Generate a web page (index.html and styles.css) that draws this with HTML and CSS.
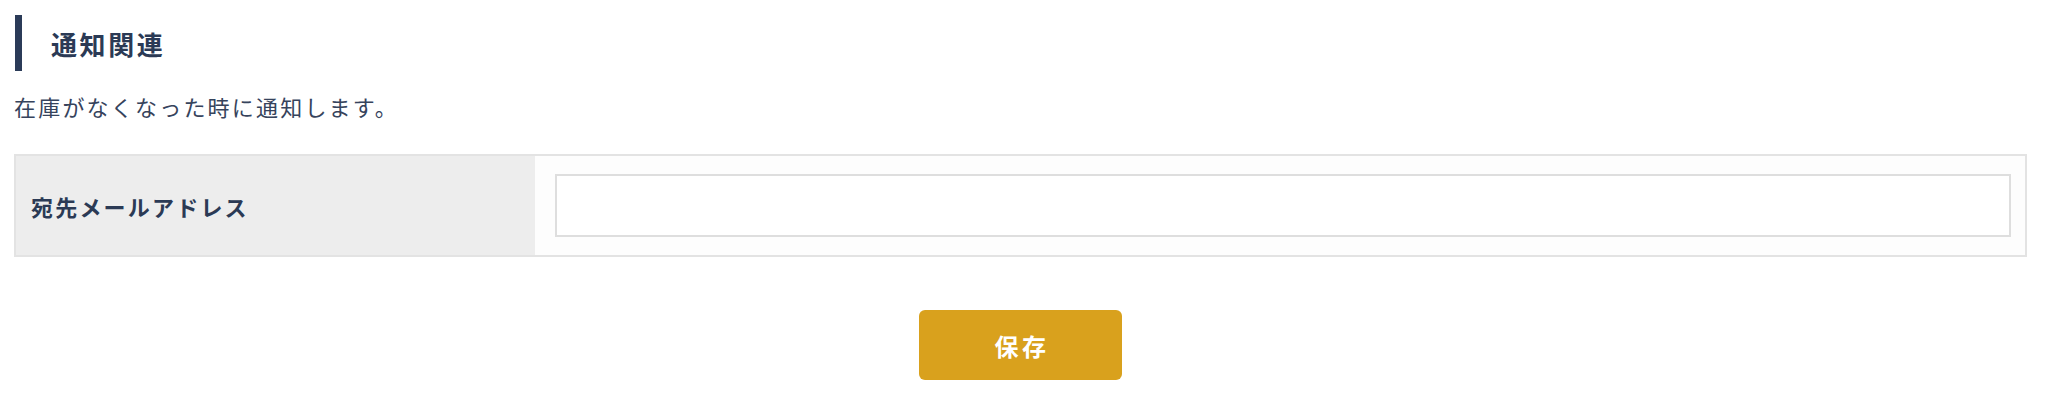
FILE: index.html
```html
<!DOCTYPE html>
<html lang="ja">
<head>
<meta charset="utf-8">
<title>通知関連</title>
<link rel="stylesheet" href="styles.css">
</head>
<body>
<div class="page">
  <h2 class="section-title">通知関連</h2>
  <p class="description">在庫がなくなった時に通知します。</p>
  <div class="form-table">
    <div class="form-label">宛先メールアドレス</div>
    <div class="form-field"><input class="text-input" type="text"></div>
  </div>
  <div class="actions">
    <button class="save-button" type="button">保存</button>
  </div>
</div>
</body>
</html>
```
FILE: styles.css
```css
html, body {
  margin: 0;
  padding: 0;
  background: #ffffff;
}
body {
  font-family: "Noto Sans CJK JP", "Noto Sans", sans-serif;
  color: #2b3a55;
}
.page {
  padding: 15px 21px 0 14px;
}
.section-title {
  margin: 0 0 0 1px;
  height: 56px;
  border-left: 7px solid #2b3b58;
  padding-left: 29px;
  display: flex;
  align-items: center;
  font-size: 26px;
  font-weight: 700;
  letter-spacing: 0.1em;
  color: #2b3a55;
}
.description {
  margin: 19px 0 0 0;
  font-size: 22px;
  line-height: 33px;
  letter-spacing: 0.1em;
  color: #36435c;
  font-weight: 400;
}
.form-table {
  margin-top: 31px;
  display: grid;
  grid-template-columns: 519px 1fr;
  border: 2px solid #e3e3e3;
  background: #fdfdfd;
}
.form-label {
  background: #ededed;
  display: flex;
  align-items: center;
  padding-left: 15px;
  font-size: 22px;
  font-weight: 700;
  letter-spacing: 0.1em;
  color: #2b3a55;
}
.form-field {
  padding: 18px 14px 18px 20px;
}
.text-input {
  display: block;
  box-sizing: border-box;
  width: 100%;
  height: 63px;
  border: 2px solid #dedede;
  background: #ffffff;
  margin: 0;
  font-size: 20px;
  font-family: inherit;
}
.actions {
  display: flex;
  justify-content: center;
  margin-top: 53px;
}
.save-button {
  width: 203px;
  height: 70px;
  border: none;
  border-radius: 6px;
  background: #d9a11d;
  color: #ffffff;
  font-family: "Noto Sans CJK JP", "Noto Sans", sans-serif;
  font-size: 24px;
  font-weight: 700;
  letter-spacing: 0.15em;
  padding: 0 0 0 3px;
}
```
